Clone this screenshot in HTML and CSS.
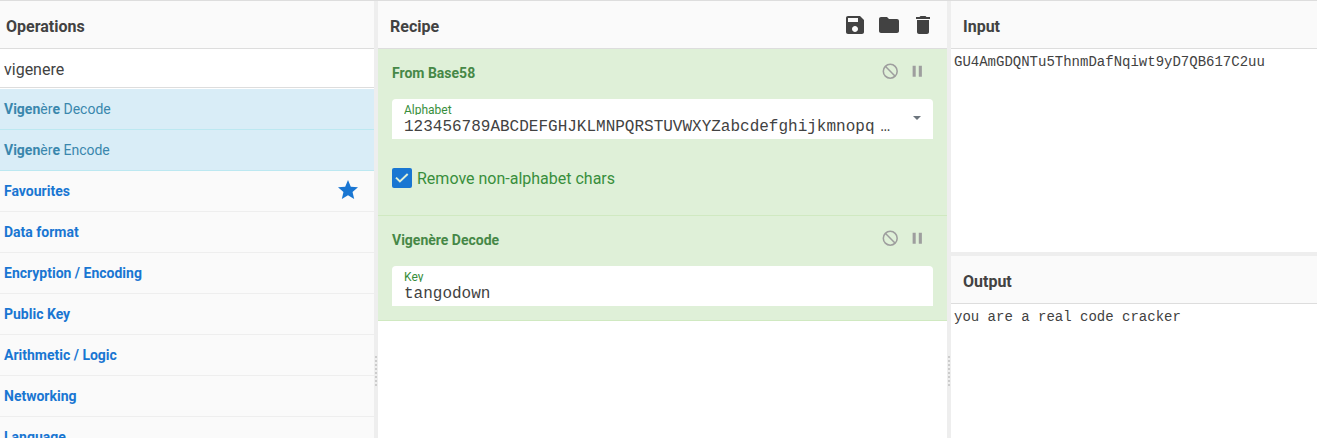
FILE: index.html
```html
<!DOCTYPE html>
<html lang="en">
<head>
<meta charset="utf-8">
<title>CyberChef</title>
<link rel="stylesheet" href="styles.css">
</head>
<body>
<main class="workspace">
  <section class="operations">
    <header class="title title-ops">Operations</header>
    <div class="search">vigenere</div>
    <ul class="results">
      <li><b>Vigen</b>èr<b>e</b> Decode</li>
      <li><b>Vigen</b>èr<b>e</b> Encode</li>
    </ul>
    <ul class="categories">
      <li>Favourites <svg class="star" viewBox="0 0 24 24"><path d="M12 17.27L18.18 21l-1.64-7.03L22 9.24l-7.19-.61L12 2 9.19 8.63 2 9.24l5.46 4.73L5.82 21z"/></svg></li>
      <li>Data format</li>
      <li>Encryption / Encoding</li>
      <li>Public Key</li>
      <li>Arithmetic / Logic</li>
      <li>Networking</li>
      <li>Language</li>
    </ul>
  </section>
  <div class="gutter"><i class="grip"></i></div>
  <section class="recipe">
    <header class="title">Recipe
      <span class="tools">
        <svg viewBox="0 0 24 24"><path d="M17 3H5c-1.11 0-2 .9-2 2v14c0 1.100.89 2 2 2h14c1.100 0 2-.9 2-2V7l-4-4zm-5 16c-1.660 0-3-1.340-3-3s1.340-3 3-3 3 1.340 3 3-1.340 3-3 3zm3-10H5V5h10v4z"/></svg>
        <svg viewBox="0 0 24 24"><path d="M10 4H4c-1.100 0-1.990.9-1.990 2L2 18c0 1.100.9 2 2 2h16c1.100 0 2-.9 2-2V8c0-1.100-.9-2-2-2h-8l-2-2z"/></svg>
        <svg viewBox="0 0 24 24"><path d="M6 19c0 1.100.9 2 2 2h8c1.100 0 2-.9 2-2V7H6v12zM19 4h-3.500l-1-1h-5l-1 1H5v2h14V4z"/></svg>
      </span>
    </header>
    <article class="step step-base58">
      <div class="step-head">From Base58
        <span class="step-icons">
          <svg viewBox="0 0 24 24"><g class="ban"><circle cx="12" cy="12" r="9"/><path d="M5.600 5.600L18.400 18.400"/></g></svg>
          <svg viewBox="0 0 24 24"><path d="M6 19h4V5H6v14zm8-14v14h4V5h-4z"/></svg>
        </span>
      </div>
      <div class="field">
        <div class="field-text"><label>Alphabet</label><div class="value"><span>123456789ABCDEFGHJKLMNPQRSTUVWXYZabcdefghijkmnopq</span><span class="more">…</span></div></div>
        <i class="caret"></i>
      </div>
      <div class="check">
        <svg class="box" viewBox="0 0 20 20"><path d="M4 9.600L7.900 13.400L15.700 6"/></svg>
        <span>Remove non-alphabet chars</span>
      </div>
    </article>
    <article class="step">
      <div class="step-head">Vigenère Decode
        <span class="step-icons">
          <svg viewBox="0 0 24 24"><g class="ban"><circle cx="12" cy="12" r="9"/><path d="M5.600 5.600L18.400 18.400"/></g></svg>
          <svg viewBox="0 0 24 24"><path d="M6 19h4V5H6v14zm8-14v14h4V5h-4z"/></svg>
        </span>
      </div>
      <div class="field">
        <div class="field-text"><label>Key</label><div class="value">tangodown</div></div>
      </div>
    </article>
  </section>
  <div class="gutter"><i class="grip"></i></div>
  <section class="io">
    <div class="input">
      <header class="title">Input</header>
      <pre>GU4AmGDQNTu5ThnmDafNqiwt9yD7QB617C2uu</pre>
    </div>
    <div class="split"></div>
    <div class="output">
      <header class="title">Output</header>
      <pre>you are a real code cracker</pre>
    </div>
  </section>
</main>
</body>
</html>
```
FILE: styles.css
```css
* { box-sizing: border-box; }
body {
  margin: 0;
  height: 438px;
  overflow: hidden;
  font-family: Roboto, "Liberation Sans", sans-serif;
  color: #424242;
  background: #fff;
}
ul { list-style: none; margin: 0; padding: 0; }
.workspace {
  display: grid;
  grid-template-columns: 374px 4px 569px 4px 1fr;
  height: 438px;
  border-top: 1px solid #ddd;
}
.operations { background: #fafafa; overflow: hidden; }
.title {
  display: flex;
  align-items: center;
  justify-content: space-between;
  height: 48px;
  padding: 4px 12px 0;
  border-bottom: 1px solid #ddd;
  background: #fafafa;
  font-size: 16px;
  font-weight: 700;
}
.title-ops { padding-left: 6px; }
.search {
  height: 40px;
  padding: 1px 4px 0;
  line-height: 39px;
  font-size: 16px;
  background: linear-gradient(#ddd, #ddd) 0 38px / 100% 1px no-repeat #fff;
}
.results li, .categories li {
  display: flex;
  align-items: center;
  height: 41px;
  padding: 0 4px;
  font-size: 14px;
  white-space: pre;
}
.results li { background: #d9edf7; color: #3a87ad; border-bottom: 1px solid #bce8f1; }
.categories li {
  justify-content: space-between;
  padding-right: 16px;
  color: #1976d2;
  font-weight: 700;
  border-bottom: 1px solid #eee;
}
.star { width: 24px; height: 24px; margin-right: -2px; margin-top: -3px; fill: #1976d2; }
.gutter { display: flex; justify-content: center; align-items: flex-start; background: #eee; }
.grip {
  width: 2px;
  height: 30px;
  margin-top: 355px;
  background: repeating-linear-gradient(#ccc 0 2px, transparent 2px 4px);
}
.tools { display: flex; gap: 10px; margin-top: -4px; }
.tools svg { width: 24px; height: 24px; fill: #424242; }
.step {
  height: 105px;
  padding: 14px 14px 0;
  background: #dff0d8;
  color: #468847;
  border-bottom: 1px solid #d0e9c1;
}
.step-base58 { height: 167px; }
.step-head {
  display: flex;
  justify-content: space-between;
  align-items: center;
  height: 20px;
  font-size: 14px;
  font-weight: 700;
}
.step-icons { display: flex; gap: 9px; margin: -4px 6.5px 0 0; }
.step-icons svg { width: 18.5px; height: 18.5px; fill: #9e9e9e; }
.ban { fill: none; stroke: #9e9e9e; stroke-width: 2; }
.field {
  display: flex;
  height: 40px;
  margin-top: 16px;
  padding: 4px 12px 0;
  background: #fff;
  border-radius: 4px 4px 0 0;
}
.field-text { width: 487px; }
.field label { display: block; height: 12px; line-height: 14px; font-size: 12px; color: #388e3c; overflow: hidden; }
.value {
  display: flex;
  height: 20px;
  margin-top: 2px;
  line-height: 20px;
  font-family: "Liberation Mono", monospace;
  font-size: 16px;
  color: #424242;
  white-space: nowrap;
}
.more { margin-left: 6px; }
.caret {
  width: 0;
  height: 0;
  margin: 13px 0 0 22px;
  border: 4px solid transparent;
  border-top-color: #6c757d;
  border-bottom: 0;
}
.check {
  display: flex;
  align-items: center;
  gap: 5px;
  height: 20px;
  margin-top: 29px;
  font-size: 16px;
  color: #388e3c;
}
.box {
  width: 20px;
  height: 20px;
  border-radius: 2px;
  background: #1976d2;
  fill: none;
  stroke: #dff0d8;
  stroke-width: 2;
}
.io { display: grid; grid-template-rows: 251px 4px 1fr; min-width: 0; }
.split { background: #eee; }
.io pre {
  margin: 0;
  padding: 5px 3px;
  font: 14px/16px "Liberation Mono", monospace;
}
```
